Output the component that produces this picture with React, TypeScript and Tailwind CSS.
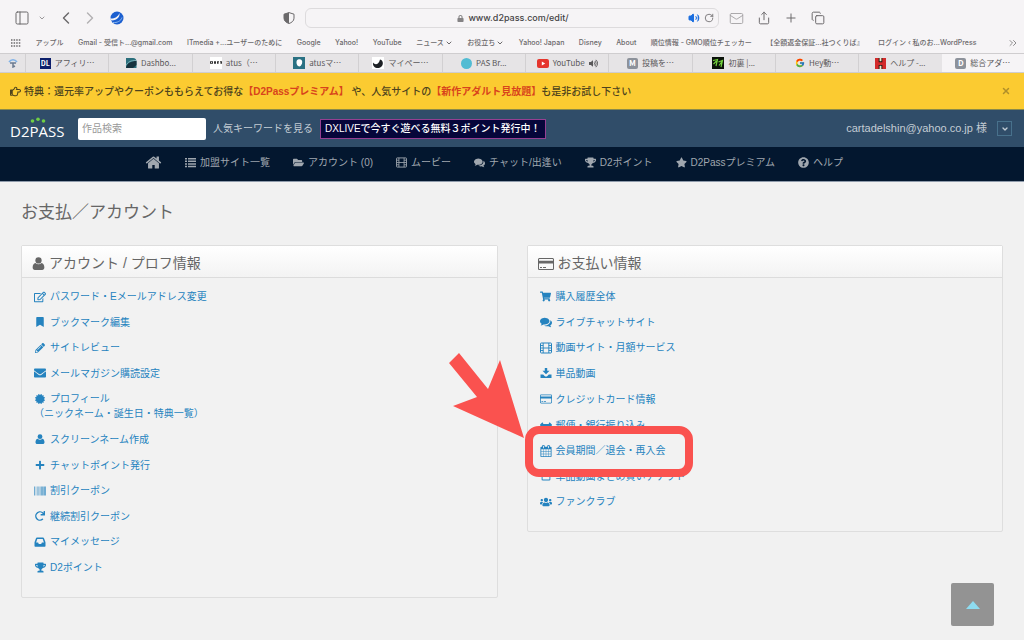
import React, { FormEvent, ReactNode } from 'react';
import {
  FaArrowsAltH,
  FaBarcode,
  FaBookmark,
  FaCertificate,
  FaEnvelope,
  FaFolderOpen,
  FaLock,
  FaPencilAlt,
  FaPlus,
  FaQuestionCircle,
  FaRedo,
  FaRegEdit,
  FaRegHandPointRight,
  FaRegSquare,
  FaShoppingCart,
  FaStar,
  FaTrophy,
  FaUsers,
  FaVolumeUp,
} from 'react-icons/fa';
import { FcGoogle } from 'react-icons/fc';
import { ChevronDown, ChevronLeft, ChevronRight, ChevronsRight, Copy, Mail, PanelLeft, Plus, RotateCw, Share, Volume2, X } from 'lucide-react';

type MenuItem = {
  icon: ReactNode;
  label: string;
  note?: string;
  marked?: boolean;
};

const HomeIcon = () => (
  <svg viewBox="0 0 1792 1792" className="size-[17px]" fill="currentColor">
    <path d="M1472 992v480q0 26-19 45t-45 19h-384v-384h-256v384h-384q-26 0-45-19t-19-45v-480q0-1 .5-3t.5-3l575-474 575 474q1 2 1 6zm223-69l-62 74q-8 9-21 11h-3q-13 0-21-7l-692-577-692 577q-12 8-24 7-13-2-21-11l-62-74q-8-10-7-23.5t11-21.5l719-599q32-26 76-26t76 26l244 204v-195q0-14 9-23t23-9h192q14 0 23 9t9 23v408l219 182q10 8 11 21.5t-7 23.5z" />
  </svg>
);

const ListIcon = () => (
  <svg viewBox="0 0 11 11" className="size-[11px]" fill="currentColor">
    <path d="M0 1h2v1.500H0zM3 1h8v1.500H3zM0 3.600h2v1.500H0zM3 3.600h8v1.500H3zM0 6.200h2v1.500H0zM3 6.200h8v1.500H3zM0 8.800h2v1.500H0zM3 8.800h8v1.500H3z" />
  </svg>
);

const FilmIcon = () => (
  <svg viewBox="0 0 12 12" className="size-3" fill="none" stroke="currentColor">
    <rect x="0.500" y="1" width="11" height="10" rx="0.800" strokeWidth="1" />
    <path d="M3.200 1v10M8.800 1v10M3.200 6h5.600M.6 3.500h2.600M.6 6h2.600M.6 8.500h2.600M8.800 3.500h2.600M8.800 6h2.600M8.800 8.500h2.600" strokeWidth="0.900" />
  </svg>
);

const CommentsIcon = () => (
  <svg viewBox="0 0 1792 1792" className="size-3" fill="currentColor">
    <path d="M1408 768q0 139-94 257t-256.5 186.5-353.5 68.5q-86 0-176-16-124 88-278 128-36 9-86 16h-3q-11 0-20.5-8t-11.5-21q-1-3-1-6.5t.5-6.500 2-6l2.500-5 3.500-5.500 4-5 4.500-5 4-4.500q5-6 23-25t26-29.500 22.500-29 25-38.500 20.500-44q-124-72-195-177t-71-224q0-139 94-257t256.500-186.500 353.500-68.500 353.500 68.500 256.500 186.500 94 257zm384 256q0 120-71 224.500t-195 176.500q10 24 20.500 44t25 38.500 22.500 29 26 29.500 23 25q1 1 4 4.500t4.500 5 4 5 3.500 5.500l2.500 5 2 6 .5 6.500-1 6.500q-3 14-13 22t-22 7q-50-7-86-16-154-40-278-128-90 16-176 16-271 0-472-132 58 4 88 4 161 0 309-45t264-129q125-92 192-212t67-254q0-77-23-152 129 71 204 178t75 230z" />
  </svg>
);

const UserIcon = ({ className }: { className: string }) => (
  <svg viewBox="0 0 12 12" className={className} fill="currentColor">
    <circle cx="6" cy="3.200" r="2.900" />
    <path d="M3.200 5.600C1.500 5.800.6 7.600.6 9.800.6 11.200 1.500 12 2.600 12h6.800c1.100 0 2-.8 2-2.200 0-2.200-.9-4-2.600-4.200-.8.800-1.800 1.200-2.800 1.200s-2-.4-2.800-1.200z" />
  </svg>
);

const CardIcon = () => (
  <svg viewBox="0 0 16 16" className="size-4" fill="currentColor">
    <path
      d="M1.600 2h12.800c.9 0 1.600.7 1.600 1.600v8.800c0 .9-.7 1.600-1.600 1.600H1.600C.7 14 0 13.300 0 12.400V3.600C0 2.700.7 2 1.600 2zM1 4.800h14V3.600c0-.4-.2-.6-.6-.6H1.600c-.4 0-.6.2-.6.6zm0 2.600v5c0 .4.2.6.6.6h12.800c.4 0 .6-.2.6-.6v-5zM2 11h2v1H2zm3 0h3v1H5z"
      fillRule="evenodd"
    />
  </svg>
);

const DownloadIcon = () => (
  <svg viewBox="0 0 12 12" className="size-3" fill="currentColor">
    <path d="M4.800 1h2.400v2.800h2.300L6 7.200 2.500 3.800h2.300z" />
    <path d="M.5 7.500h2.700l1.400 1.400c.8.700 2 .7 2.800 0l1.400-1.400h2.700V11H.5z" />
  </svg>
);

const InboxIcon = () => (
  <svg viewBox="0 0 12 12" className="size-3" fill="currentColor">
    <path d="M3 1.500h6c.5 0 .8.2 1 .7l1.300 3.600c.1.300.2.600.2 1v3.200c0 .4-.3.700-.7.700H1.200c-.4 0-.7-.3-.7-.7V6.800c0-.4.1-.7.200-1L2 2.200c.2-.5.5-.7 1-.7zm.3 1.400L2.100 6.500h2l.7 1.400h2.400l.7-1.400h2L8.700 2.900z" fillRule="evenodd" />
  </svg>
);

const CalendarIcon = () => (
  <svg viewBox="0 0 1792 1792" className="size-3" fill="currentColor">
    <path d="M192 1664h288v-288h-288v288zm352 0h320v-288h-320v288zm-352-352h288v-320h-288v320zm352 0h320v-320h-320v320zm-352-384h288v-288h-288v288zm736 736h320v-288h-320v288zm-384-736h320v-288h-320v288zm768 736h288v-288h-288v288zm-384-352h320v-320h-320v320zm-352-864v-288q0-13-9.500-22.500t-22.500-9.500h-64q-13 0-22.500 9.500t-9.500 22.500v288q0 13 9.500 22.500t22.500 9.500h64q13 0 22.500-9.500t9.500-22.500zm736 864h288v-320h-288v320zm-384-384h320v-288h-320v288zm384 0h288v-288h-288v288zm32-480v-288q0-13-9.500-22.500t-22.500-9.500h-64q-13 0-22.500 9.500t-9.500 22.500v288q0 13 9.500 22.500t22.500 9.500h64q13 0 22.500-9.500t9.500-22.500zm384-64v1280q0 52-38 90t-90 38h-1408q-52 0-90-38t-38-90v-1280q0-52 38-90t90-38h128v-96q0-66 47-113t113-47h64q66 0 113 47t47 113v96h384v-96q0-66 47-113t113-47h64q66 0 113 47t47 113v96h128q52 0 90 38t38 90z" />
  </svg>
);

const bookmarks = [
  { label: 'アップル' },
  { label: 'Gmail - 受信ト...@gmail.com' },
  { label: 'ITmedia +...ユーザーのために' },
  { label: 'Google' },
  { label: 'Yahoo!' },
  { label: 'YouTube' },
  { label: 'ニュース', folder: true },
  { label: 'お役立ち', folder: true },
  { label: 'Yahoo! Japan' },
  { label: 'Disney' },
  { label: 'About' },
  { label: '順位情報 - GMO順位チェッカー' },
  { label: '【全額返金保証...社つくりば』' },
  { label: 'ログイン ‹ 私のお...WordPress' },
];

const tabs: { label: string; icon: ReactNode; sound?: boolean }[] = [
  {
    label: 'アフィリ…',
    icon: <span className="flex size-[11px] items-center justify-center bg-[#0c1f6b] text-[7px] font-bold text-white">DL</span>,
  },
  {
    label: 'Dashbo...',
    icon: (
      <svg viewBox="0 0 12 12" className="size-3">
        <path d="M1 1h7a3.500 3.500 0 0 1 3.500 3.500V11H1z" fill="#2b6f7c" />
        <path d="M1 11c1-5 5-7 10.500-7v4L8 11z" fill="#16323d" />
        <path d="M1 8.500C3 4.500 6 3.500 11 3.500" stroke="#9cc9cf" strokeWidth="0.700" fill="none" />
      </svg>
    ),
  },
  {
    label: 'atus（…',
    icon: (
      <svg viewBox="0 0 12 12" className="size-3">
        <rect width="12" height="12" fill="#fff" />
        <path d="M0 5.500h3M4 5.500h2M7 5.500h2M10 5.500h2" stroke="#333" strokeWidth="2.500" />
        <path d="M1 5.500h1M8 6h3" stroke="#fff" strokeWidth="0.800" />
      </svg>
    ),
  },
  {
    label: 'atusマ…',
    icon: (
      <svg viewBox="0 0 12 12" className="size-3">
        <rect width="12" height="12" fill="#2a7183" />
        <path d="M5 2.500c3-1 5 1 4 4S6.500 10 5 9 2.500 3.500 5 2.500z" fill="#fff" />
      </svg>
    ),
  },
  {
    label: 'マイペー…',
    icon: (
      <svg viewBox="0 0 12 12" className="size-3">
        <rect width="12" height="12" fill="#fff" />
        <path d="M1 5.500c2 3 6 2 7-3 4 1 4 7-1 8.500C3 11.500.5 9 1 5.500z" fill="#1d2025" />
      </svg>
    ),
  },
  { label: 'PAS Br...', icon: <span className="size-[11px] rounded-full bg-[#52bcd3]" /> },
  {
    label: 'YouTube',
    sound: true,
    icon: (
      <svg viewBox="0 0 12 9" className="h-[9px] w-3">
        <rect width="12" height="9" rx="2" fill="#e5352d" />
        <path d="M4.800 2.500v4l3.400-2z" fill="#fff" />
      </svg>
    ),
  },
  {
    label: '投稿を…',
    icon: <span className="flex size-[11px] items-center justify-center rounded-xs bg-[#8d929b] text-[8px] font-bold text-white">M</span>,
  },
  {
    label: '初裏 |...',
    icon: (
      <svg viewBox="0 0 12 12" className="size-3">
        <rect width="12" height="12" fill="#0b120a" />
        <path d="M1 3.500l4.500-1L4 9M1.500 7l3-3M6.500 5l4-1.500L9 10M7 8.500l3-4" stroke="#72d13c" strokeWidth="1.200" fill="none" />
      </svg>
    ),
  },
  { label: 'Hey動…', icon: <FcGoogle className="size-[10px]" /> },
  {
    label: 'ヘルプ -...',
    icon: (
      <svg viewBox="0 0 12 12" className="size-[11px]">
        <rect width="12" height="12" fill="#1c1512" />
        <path d="M5 0h2v3.500H5zM5 8.500h2V12H5z" fill="#f4e9c9" />
        <path d="M0 0h4v12H0zM8 0h4v12H8zM4 4.500h4v3H4z" fill="#d32b2b" />
      </svg>
    ),
  },
  {
    label: '総合アダ…',
    icon: <span className="flex size-[11px] items-center justify-center rounded-xs bg-[#8d929b] text-[8px] font-bold text-white">D</span>,
  },
];

const navItems = [
  { label: '加盟サイト一覧', icon: <ListIcon /> },
  { label: 'アカウント (0)', icon: <FaFolderOpen /> },
  { label: 'ムービー', icon: <FilmIcon /> },
  { label: 'チャット/出逢い', icon: <CommentsIcon /> },
  { label: 'D2ポイント', icon: <FaTrophy /> },
  { label: 'D2Passプレミアム', icon: <FaStar /> },
  { label: 'ヘルプ', icon: <FaQuestionCircle /> },
];

const accountItems: MenuItem[] = [
  { icon: <FaRegEdit className="size-3" />, label: 'パスワード・Eメールアドレス変更' },
  { icon: <FaBookmark className="size-[10px]" />, label: 'ブックマーク編集' },
  { icon: <FaPencilAlt className="size-[10px]" />, label: 'サイトレビュー' },
  { icon: <FaEnvelope className="size-3" />, label: 'メールマガジン購読設定' },
  { icon: <FaCertificate className="size-[10px]" />, label: 'プロフィール', note: '（ニックネーム・誕生日・特典一覧）' },
  { icon: <UserIcon className="size-[10px]" />, label: 'スクリーンネーム作成' },
  { icon: <FaPlus className="size-[10px]" />, label: 'チャットポイント発行' },
  { icon: <FaBarcode className="size-3" />, label: '割引クーポン' },
  { icon: <FaRedo className="size-[10px]" />, label: '継続割引クーポン' },
  { icon: <InboxIcon />, label: 'マイメッセージ' },
  { icon: <FaTrophy className="size-[11px]" />, label: 'D2ポイント' },
];

const paymentItems: MenuItem[] = [
  { icon: <FaShoppingCart className="size-[11px]" />, label: '購入履歴全体' },
  { icon: <CommentsIcon />, label: 'ライブチャットサイト' },
  { icon: <FilmIcon />, label: '動画サイト・月額サービス' },
  { icon: <DownloadIcon />, label: '単品動画' },
  { icon: <CardIcon />, label: 'クレジットカード情報' },
  { icon: <FaArrowsAltH className="size-3" />, label: '郵便・銀行振り込み' },
  { icon: <CalendarIcon />, label: '会員期間／退会・再入会', marked: true },
  { icon: <FaRegSquare className="size-[10px]" />, label: '単品動画まとめ買いチケット' },
  { icon: <FaUsers className="size-3" />, label: 'ファンクラブ' },
];

// red arrow and frame drawn over the cancellation link
const Marker = () => (
  <svg viewBox="0 0 246 126" className="pointer-events-none absolute -top-[91px] -left-[92px] z-10 h-[126px] w-[246px]">
    <path d="M11 1 1 11l28 34-24 9 71 32L52 8l-12 29z" fill="#fa524f" />
    <rect x="81" y="78" width="160" height="43" rx="10" fill="none" stroke="#fa524f" strokeWidth="8" />
  </svg>
);

const BrowserBar = () => (
  <div className="bg-[#f6f4f6] font-['Inter','Noto_Sans_CJK_JP',sans-serif] text-[#6b696b]">
    <div className="grid grid-cols-[305px_1fr_305px] items-center pt-2">
      <div className="flex items-center pr-[10px] pl-[14px]">
        <button aria-label="サイドバー"><PanelLeft className="size-4" strokeWidth={1.5} /></button>
        <button aria-label="タブグループ" className="ml-2"><ChevronDown className="size-2" /></button>
        <button aria-label="戻る" className="ml-[10px]"><ChevronLeft className="size-5" strokeWidth={1.7} /></button>
        <button aria-label="進む" className="ml-1 text-[#b3b1b3]"><ChevronRight className="size-5" strokeWidth={1.7} /></button>
        <button aria-label="拡張機能" className="ml-[10px]">
          <svg viewBox="0 0 14 14" className="size-[14px]">
            <circle cx="7" cy="7" r="6.500" fill="#1c5fd0" />
            <path d="M0 7.500C4 8 8 6 9.500 2c.5 4-2 7-8 7.500z" fill="#f6f4f6" />
            <path d="M3 11.500c4 .5 8-1.500 9-5" stroke="#8db8ee" fill="none" />
          </svg>
        </button>
        <button aria-label="プライバシー" className="ml-auto">
          <svg viewBox="0 0 12 12" className="size-3">
            <path d="M6 .6 1 2.200v4C1 9 3.500 10.700 6 11.500c2.500-.8 5-2.500 5-5.300v-4z" fill="none" stroke="currentColor" />
            <path d="M6 .6 1 2.200v4C1 9 3.500 10.700 6 11.500z" fill="currentColor" />
          </svg>
        </button>
      </div>
      <div className="flex h-[20px] items-center rounded-md border border-[#dddbdd] px-1">
        <div className="flex flex-1 items-center justify-center gap-1 pl-7 text-[9px] font-medium text-[#454345]">
          <FaLock className="size-[7px] text-[#858385]" />
          <span>www.d2pass.com/edit/</span>
        </div>
        <Volume2 className="size-3 text-[#1c6fe0]" fill="currentColor" />
        <button aria-label="再読み込み" className="ml-1"><RotateCw className="size-[10px]" /></button>
      </div>
      <div className="flex items-center gap-[13px] pl-[10px]">
        <button aria-label="メール" className="text-[#a5a3a5]"><Mail className="size-[15px]" strokeWidth={1.5} /></button>
        <button aria-label="共有"><Share className="size-[14px]" strokeWidth={1.7} /></button>
        <button aria-label="新規タブ"><Plus className="size-[14px]" strokeWidth={1.7} /></button>
        <button aria-label="タブ一覧"><Copy className="size-[14px]" strokeWidth={1.7} /></button>
      </div>
    </div>
    <nav className="flex h-[25px] items-center justify-between pt-[5px] pr-[5px] pl-[11px] text-[7px] whitespace-nowrap">
      <svg viewBox="0 0 10 8" className="h-2 w-[10px]" fill="none" stroke="currentColor" strokeWidth="1.500" strokeDasharray="1.500 1.100">
        <path d="M0 1h10M0 4h10M0 7h10" />
      </svg>
      {bookmarks.map(({ label, folder }) => (
        <a key={label} href="#" className="flex items-center gap-px font-medium">
          {label}
          {folder && <ChevronDown className="size-2" strokeWidth={3} />}
        </a>
      ))}
      <ChevronsRight className="ml-4 size-3" strokeWidth={1.5} />
    </nav>
    <div className="flex h-5 border-y border-[#cfcdcf] bg-[#e6e4e6] font-['Noto_Sans_CJK_JP',sans-serif] text-[8px] text-[#5a585a]">
      <div className="flex w-[25px] items-center justify-center">
        <svg viewBox="0 0 10 10" className="size-[10px]" fill="none" strokeWidth="1.500">
          <path d="M1 4c2-3 6-3 8 0" stroke="#7fb2e8" />
          <path d="M2 5h6M5 5v4l2-1" stroke="#6b7b92" />
        </svg>
      </div>
      {tabs.map(({ label, icon, sound }, index) => (
        <div
          key={label}
          className={
            index === tabs.length - 1
              ? 'flex flex-1 items-center justify-center gap-1 bg-[#f6f4f6] whitespace-nowrap'
              : 'flex flex-1 items-center justify-center gap-1 border-l border-[#d2d0d2] whitespace-nowrap'
          }
        >
          {icon}
          <span>{label}</span>
          {sound && <FaVolumeUp className="size-[9px]" />}
        </div>
      ))}
    </div>
  </div>
);

const Notice = () => (
  <div className="flex h-[37px] items-center border-b border-[#8a8a4a] bg-[#fbcb31] pr-[13px] pl-[10px] text-[10px] font-medium text-[#4d431d]">
    <FaRegHandPointRight className="mr-[3px] size-[11px]" />
    <p className="flex-1">
      特典：還元率アップやクーポンももらえてお得な
      <a href="#" className="font-bold text-[#d8431c]">【D2Passプレミアム】</a> や、人気サイトの
      <a href="#" className="font-bold text-[#d8431c]">【新作アダルト見放題】</a>も是非お試し下さい
    </p>
    <button aria-label="閉じる" className="text-[#b08f2a]"><X className="size-[10px]" strokeWidth={3.5} /></button>
  </div>
);

const SiteHeader = () => {
  const onSubmit = (e: FormEvent) => {
    e.preventDefault();
  };

  return (
    <header>
      <div className="flex h-[37px] items-center bg-[#304d69] pr-3 pl-[10px] text-[10px] text-[#c3ccd4]">
        <a href="#" className="relative w-[68px] pt-1 font-['Open_Sans',sans-serif] text-[15px] leading-5 text-white">
          D2PASS
          <svg viewBox="0 0 16 6" className="absolute top-0 left-5 h-[6px] w-4" fill="#6fce45">
            <circle cx="2.500" cy="4" r="1.800" />
            <circle cx="8" cy="2.200" r="1.800" />
            <circle cx="13.500" cy="4" r="1.800" />
          </svg>
        </a>
        <form onSubmit={onSubmit}>
          <input
            aria-label="作品検索"
            placeholder="作品検索"
            className="block h-[22px] w-32 rounded-xs bg-white px-1 text-[10px] text-[#555] placeholder:text-[#999]"
          />
        </form>
        <a href="#" className="ml-[7px]">人気キーワードを見る</a>
        <a href="#" className="ml-[7px] border border-[#963f92] bg-[#06063a] px-1 text-[10px] leading-[18px] font-medium text-white">
          DXLIVEで今すぐ遊べる無料３ポイント発行中！
        </a>
        <span className="ml-auto text-[11px]">cartadelshin@yahoo.co.jp 様</span>
        <button aria-label="メニューを開く" className="ml-[10px] flex size-[15px] items-center justify-center border border-[#48718c]">
          <ChevronDown className="size-2" strokeWidth={4} />
        </button>
      </div>
      <nav className="flex h-[35px] items-center justify-center gap-[23px] border-b border-[#8f9bab] bg-[#03172f] pr-9 pb-1 text-[10px] text-[#a0a7af]">
        <a href="#" aria-label="ホーム"><HomeIcon /></a>
        {navItems.map(({ label, icon }) => (
          <a key={label} href="#" className="flex items-center gap-1 [&>svg]:size-[11px]">
            {icon}
            {label}
          </a>
        ))}
      </nav>
    </header>
  );
};

const Panel = ({ title, icon, items, listClass }: { title: string; icon: ReactNode; items: MenuItem[]; listClass: string }) => (
  <section className="rounded-xs border border-[#dedede] bg-[#f2f2f2]">
    <h2 className="flex h-8 items-center gap-1 border-b border-[#dcdcdc] bg-linear-to-b from-white to-[#f3f3f3] pt-1 pl-[10px] text-[14px] text-[#666]">
      {icon}
      {title}
    </h2>
    <ul className={listClass}>
      {items.map(({ icon: itemIcon, label, note, marked }) => (
        <li key={label} className={marked ? 'relative' : undefined}>
          <a href="#" className="block">
            <span className="flex items-center gap-1">
              <span className="flex w-3 justify-center [&>svg]:max-w-3 [&>svg]:shrink-0">{itemIcon}</span>
              {label}
            </span>
            {note}
          </a>
          {marked && <Marker />}
        </li>
      ))}
    </ul>
  </section>
);

const App = () => (
  <div className="min-h-screen bg-[#f1f1f1] font-['Liberation_Sans','Noto_Sans_CJK_JP',sans-serif]">
    <BrowserBar />
    <Notice />
    <SiteHeader />
    <main className="px-[21px] pt-[18px] pb-10">
      <h1 className="text-[17px] leading-[26px] text-[#666]">お支払／アカウント</h1>
      <div className="mt-[19px] grid grid-cols-2 items-start gap-[29px]">
        <Panel
          title="アカウント / プロフ情報"
          icon={<UserIcon className="size-[13px]" />}
          items={accountItems}
          listClass="flex min-h-[319px] flex-col justify-between px-3 pt-[11px] pb-[22px] text-[10px] leading-[15px] text-[#2583bf]"
        />
        <Panel
          title="お支払い情報"
          icon={<CardIcon />}
          items={paymentItems}
          listClass="flex min-h-[253px] flex-col justify-between px-3 pt-[11px] pb-[22px] text-[10px] leading-[15px] text-[#2583bf]"
        />
      </div>
    </main>
    <button aria-label="ページの先頭へ" className="fixed right-[30px] bottom-[14px] flex size-[43px] items-center justify-center rounded-xs bg-[#939393]">
      <svg viewBox="0 0 14 8" className="h-2 w-[14px]" fill="#8edcf0">
        <path d="M7 0l7 8H0z" />
      </svg>
    </button>
  </div>
);

export default App;
